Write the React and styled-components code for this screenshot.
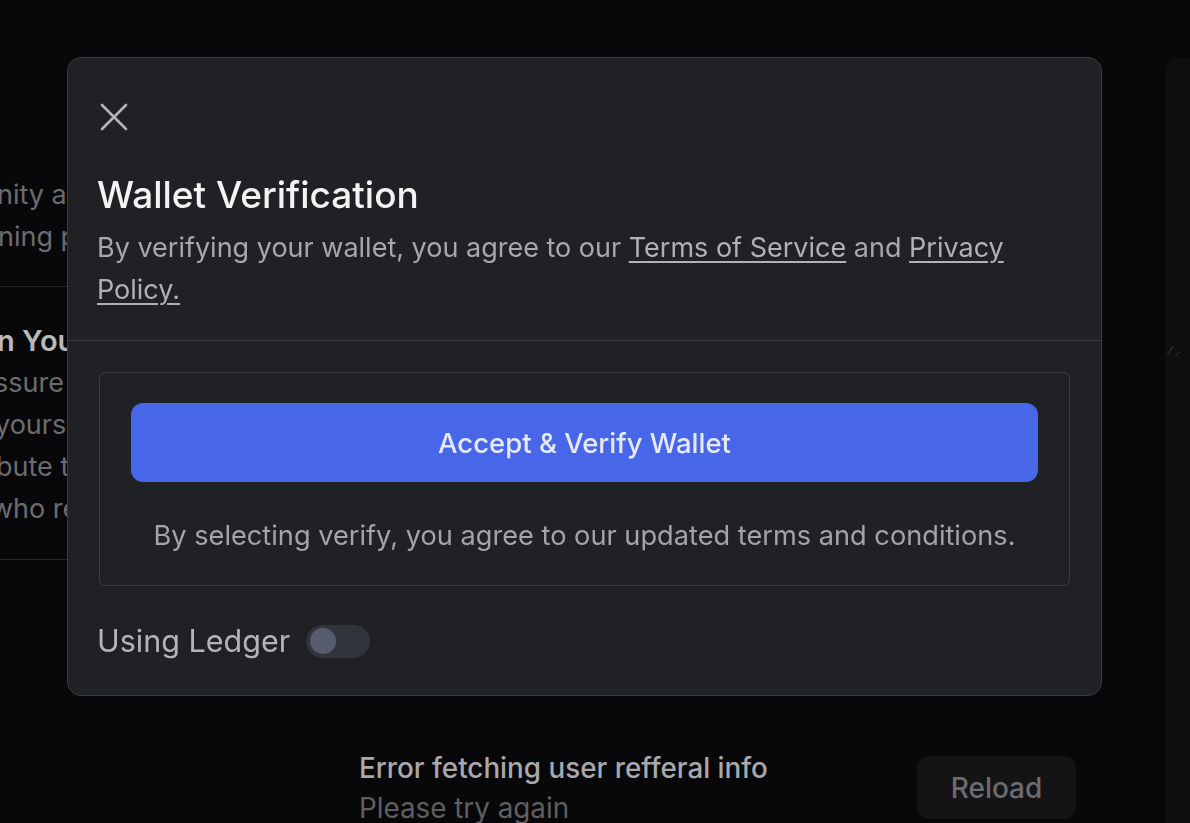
import styled, { createGlobalStyle } from 'styled-components';

const GlobalStyle = createGlobalStyle`
  html, body {
    margin: 0;
    padding: 0;
    background: #08080a;
    font-family: Inter, "Noto Sans", "Liberation Sans", sans-serif;
  }
  * {
    box-sizing: border-box;
  }
`;

const CloseIcon = () => (
  <svg width="28" height="28" viewBox="0 0 28 28" fill="none">
    <path d="M2 2L26 26M26 2L2 26" stroke="#b4b4b6" strokeWidth="2.6" strokeLinecap="round" />
  </svg>
);

const App = () => {
  return (
    <>
      <GlobalStyle />
      <StPage>
        <StMain>
          <StSection>
            <StLine $shift={-3}>nity and help us grow</StLine>
            <StLine $shift={-2}>ning program rewards</StLine>
          </StSection>
          <StSection>
            <StHeading $shift={-3}>n Your Friends</StHeading>
            <StLine $shift={-6}>ssure your friends</StLine>
            <StLine $shift={-5}>yourself rewards</StLine>
            <StLine $shift={-4}>bute to the growth</StLine>
            <StLine $shift={-9}>who refer others</StLine>
          </StSection>
          <StErrorRow>
            <StErrorText>
              <StErrorTitle>Error fetching user refferal info</StErrorTitle>
              <StErrorSub>Please try again</StErrorSub>
            </StErrorText>
            <StReloadBtn>Reload</StReloadBtn>
          </StErrorRow>
        </StMain>
        <StSidePanel>
          <StSideDots>⁄ ⸝</StSideDots>
        </StSidePanel>
      </StPage>

      <StModal>
        <StModalHeader>
          <StCloseBtn aria-label="Close">
            <CloseIcon />
          </StCloseBtn>
          <StTitle>Wallet Verification</StTitle>
          <StSubtitle>
            By verifying your wallet, you agree to our <StLink>Terms of Service</StLink> and{' '}
            <StLink>Privacy Policy.</StLink>
          </StSubtitle>
        </StModalHeader>
        <StModalBody>
          <StVerifyBox>
            <StVerifyBtn>Accept &amp; Verify Wallet</StVerifyBtn>
            <StCaption>By selecting verify, you agree to our updated terms and conditions.</StCaption>
          </StVerifyBox>
          <StLedgerRow>
            <StLedgerLabel>Using Ledger</StLedgerLabel>
            <StToggle role="switch" aria-checked="false">
              <StKnob />
            </StToggle>
          </StLedgerRow>
        </StModalBody>
      </StModal>
    </>
  );
};

export default App;

const StPage = styled.div`
  width: 100%;
  height: 100vh;
  overflow: hidden;
  display: flex;
`;

const StMain = styled.main`
  flex: 1;
  display: flex;
  flex-direction: column;
  padding-top: 174px;
  overflow: hidden;
`;

const StSection = styled.section`
  width: 420px;
  display: flex;
  flex-direction: column;
  padding-bottom: 29px;
  margin-bottom: 34px;
  border-bottom: 1px solid #26262a;
  &:first-child {
    padding-bottom: 28px;
    margin-bottom: 33px;
  }
`;

const StLine = styled.div`
  margin-left: ${(p) => p.$shift}px;
  font-size: 27px;
  line-height: 42px;
  color: #6c6c70;
  white-space: nowrap;
`;

const StHeading = styled.div`
  margin-left: ${(p) => p.$shift}px;
  font-size: 29px;
  font-weight: 600;
  line-height: 42px;
  color: #b9b9bb;
  white-space: nowrap;
`;

const StErrorRow = styled.div`
  margin-top: 153px;
  padding: 0 89px 0 359px;
  display: flex;
  justify-content: space-between;
  align-items: flex-start;
`;

const StErrorText = styled.div`
  display: flex;
  flex-direction: column;
  padding-top: 1px;
`;

const StErrorTitle = styled.div`
  font-size: 27.8px;
  font-weight: 500;
  line-height: 40px;
  color: #a9a9ab;
`;

const StErrorSub = styled.div`
  font-size: 27.8px;
  line-height: 40px;
  color: #5f5f62;
`;

const StReloadBtn = styled.button`
  width: 159px;
  height: 63px;
  margin-top: 9px;
  border: 0;
  border-radius: 12px;
  background-color: #141416;
  color: #6c6c6f;
  font-family: inherit;
  font-size: 28px;
  font-weight: 500;
`;

const StSidePanel = styled.aside`
  width: 25px;
  margin-top: 58px;
  background-color: #0e0e10;
  border-top-left-radius: 14px;
  padding-top: 281px;
`;

const StSideDots = styled.span`
  font-size: 12px;
  color: #3c3c40;
  padding-left: 4px;
`;

const StModal = styled.div`
  position: fixed;
  left: 67px;
  top: 57px;
  width: 1035px;
  background-color: #202125;
  border: 1px solid #3a3b3f;
  border-radius: 14px;
  display: flex;
  flex-direction: column;
`;

const StModalHeader = styled.div`
  padding: 45px 31px 29px 29px;
  display: flex;
  flex-direction: column;
  border-bottom: 1px solid #3a3b3f;
`;

const StCloseBtn = styled.button`
  width: 28px;
  height: 28px;
  padding: 0;
  border: 0;
  background: none;
  display: flex;
  margin-left: 3px;
`;

const StTitle = styled.h2`
  margin: 40px 0 0;
  font-size: 37px;
  font-weight: 500;
  line-height: 48px;
  color: #f3f3f4;
`;

const StSubtitle = styled.p`
  margin: 8px 0 0;
  font-size: 27px;
  line-height: 42px;
  color: #a8a8ab;
`;

const StLink = styled.span`
  text-decoration: underline;
  text-underline-offset: 4px;
  text-decoration-thickness: 1.5px;
  color: #b1b1b4;
  cursor: pointer;
`;

const StModalBody = styled.div`
  padding: 31px 31px 37px;
  display: flex;
  flex-direction: column;
  gap: 38px;
`;

const StVerifyBox = styled.div`
  border: 1px solid #3b3c40;
  border-radius: 6px;
  padding: 30px 31px 28px;
  display: flex;
  flex-direction: column;
  align-items: center;
  gap: 33px;
`;

const StVerifyBtn = styled.button`
  width: 100%;
  height: 79px;
  border: 0;
  border-radius: 12px;
  background-color: #4766e8;
  color: #e6e9f8;
  font-family: inherit;
  font-size: 27.5px;
  font-weight: 500;
  cursor: pointer;
`;

const StCaption = styled.p`
  margin: 0;
  font-size: 27.2px;
  line-height: 42px;
  color: #a4a4a7;
  text-align: center;
`;

const StLedgerRow = styled.div`
  display: flex;
  align-items: center;
  gap: 16px;
`;

const StLedgerLabel = styled.span`
  font-size: 30.5px;
  line-height: 34px;
  color: #b4b4b7;
  margin-left: -2px;
`;

const StToggle = styled.button`
  width: 64px;
  height: 33px;
  padding: 0 4px;
  border: 0;
  border-radius: 17px;
  background-color: #31343c;
  display: flex;
  align-items: center;
`;

const StKnob = styled.span`
  width: 26px;
  height: 26px;
  border-radius: 50%;
  background-color: #565c6d;
`;
